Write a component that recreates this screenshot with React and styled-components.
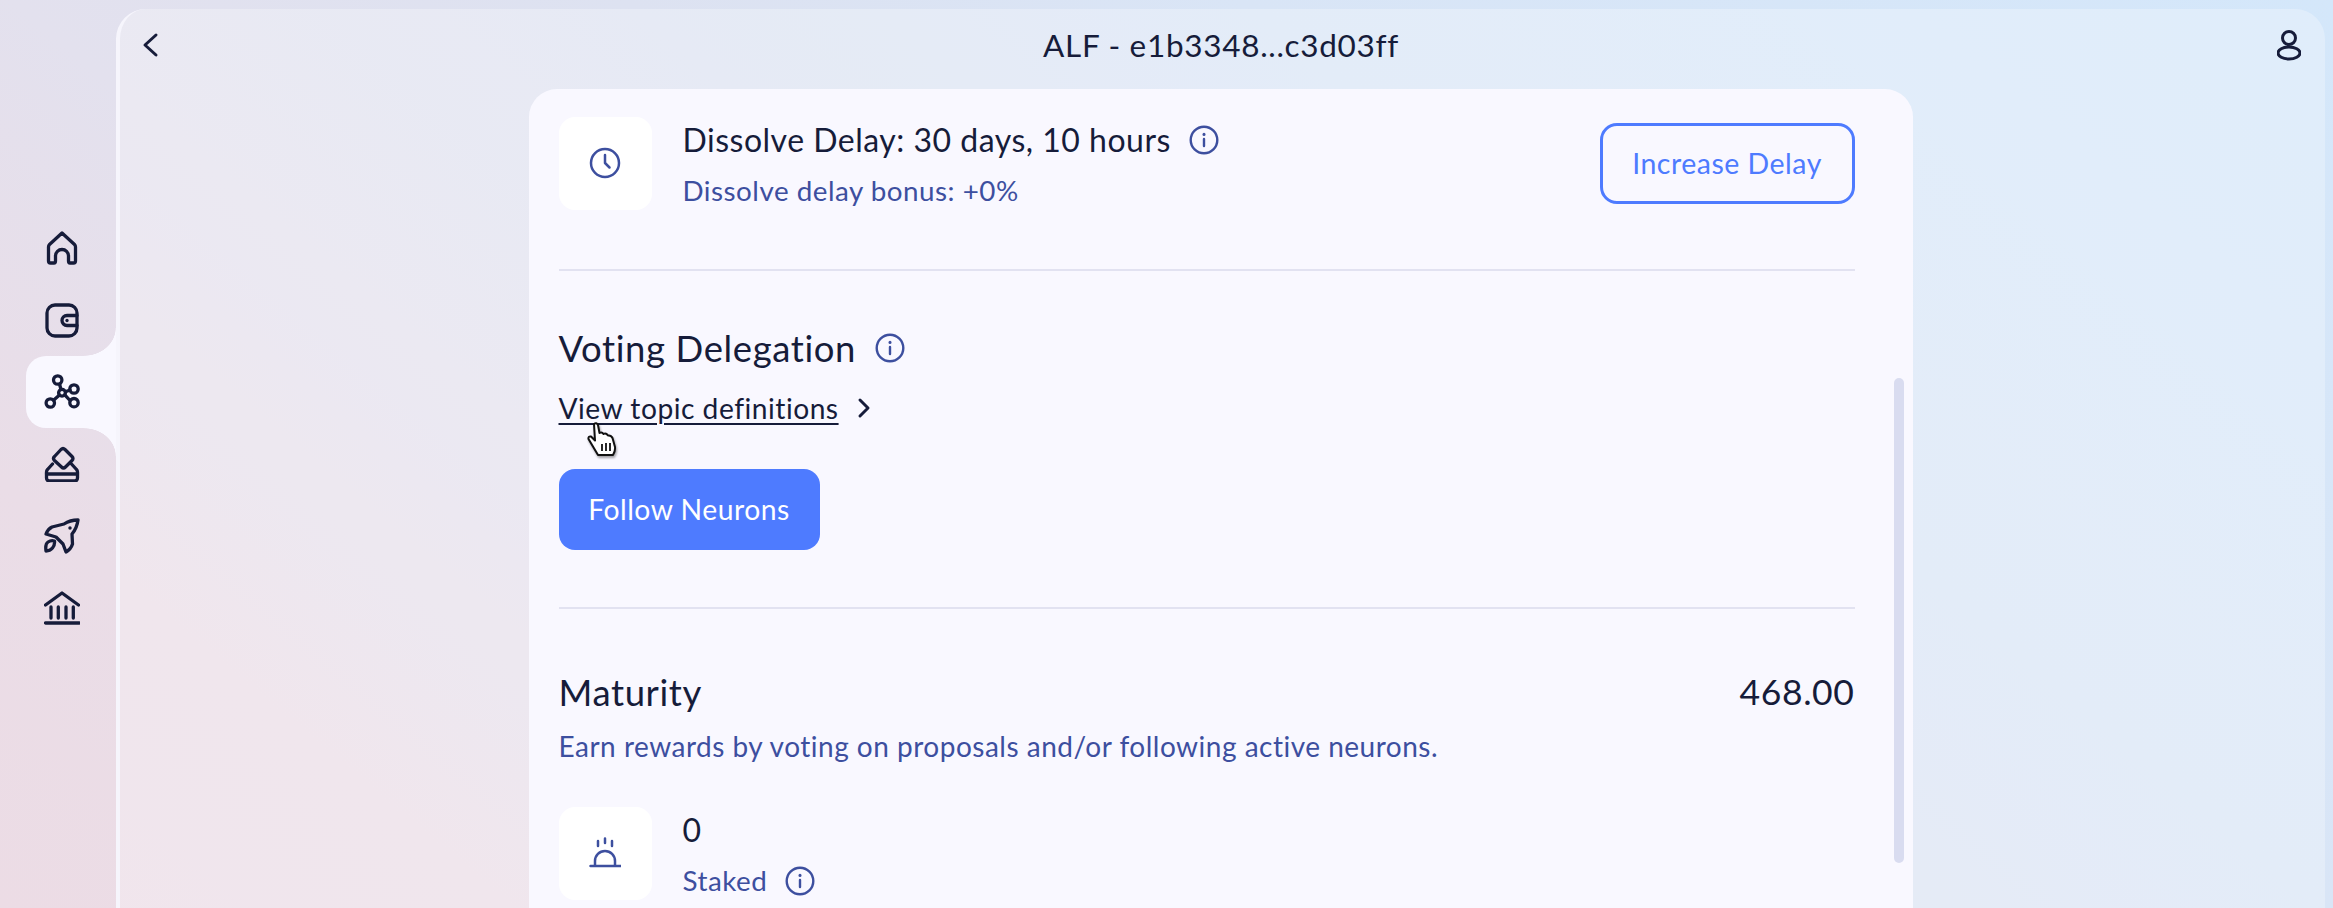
import React from 'react'
import styled, { createGlobalStyle } from 'styled-components'

const GlobalStyle = createGlobalStyle`
  html, body {
    margin: 0;
    height: 100%;
    overflow: hidden;
  }
  body {
    font-family: 'Lato', 'Inter', sans-serif;
    color: #161c3a;
  }
`

const Page = styled.div`
  display: flex;
  width: 2333px;
  height: 908px;
  overflow: hidden;
  background: linear-gradient(40deg, #ecdce5 0%, #eaddE7 15%, #e3e1ee 32%, #dde2f1 50%, #d9e5f6 68%, #d4e7fa 100%);
`

const Sidebar = styled.nav`
  flex: none;
  width: 116px;
  padding-top: 212px;
  box-sizing: border-box;
`

const NavItem = styled.div`
  position: relative;
  display: flex;
  align-items: center;
  justify-content: center;
  height: 72px;
  margin-left: 26px;
  padding-right: 18px;
  border-radius: 20px 0 0 20px;
  background: ${p => (p.$active ? '#f9f8ff' : 'transparent')};

  ${p => p.$active && `
    &::before, &::after {
      content: '';
      position: absolute;
      right: 0;
      width: 32px;
      height: 28px;
    }
    &::before {
      top: -28px;
      background: radial-gradient(ellipse 32px 28px at 0 0, transparent 98%, #f9f8ff 100%);
    }
    &::after {
      bottom: -28px;
      background: radial-gradient(ellipse 32px 28px at 0 100%, transparent 98%, #f9f8ff 100%);
    }
  `}

  svg {
    display: block;
    width: 36px;
    height: 36px;
    fill: none;
    stroke: #161c3a;
    stroke-width: 3.3;
    stroke-linecap: round;
    stroke-linejoin: round;
  }
`

const Panel = styled.main`
  flex: 1;
  min-width: 0;
  display: flex;
  flex-direction: column;
  align-items: center;
  margin: 9px 8px 0 0;
  border-left: 4px solid #f6f5fc;
  border-radius: 30px 30px 0 0;
  background: rgba(255, 255, 255, 0.28);
`

const TopBar = styled.header`
  flex: none;
  align-self: stretch;
  display: flex;
  align-items: center;
  height: 72px;
  margin-bottom: 8px;
  padding: 0 24px 0 21px;

  svg {
    display: block;
    fill: none;
    stroke: #161c3a;
    stroke-width: 3;
    stroke-linecap: round;
    stroke-linejoin: round;
  }
`

const TopSlot = styled.div`
  flex: 1;
  display: flex;
  justify-content: ${p => (p.$end ? 'flex-end' : 'flex-start')};
`

const PageTitle = styled.h1`
  margin: 0;
  font-size: 31.5px;
  font-weight: 400;
  letter-spacing: 0.7px;
`

const Card = styled.section`
  position: relative;
  flex: none;
  width: 1384px;
  height: 900px;
  box-sizing: border-box;
  margin-right: 4px;
  padding: 28px 58px 0 30px;
  border-radius: 28px 28px 0 0;
  background: #f9f8ff;
`

const Row = styled.div`
  display: flex;
  align-items: flex-start;
  gap: 31px;
`

const Tile = styled.div`
  flex: none;
  display: flex;
  align-items: center;
  justify-content: center;
  width: 93px;
  height: 93px;
  border-radius: 16px;
  background: #fff;

  svg {
    display: block;
    width: 32px;
    height: 32px;
    margin-bottom: 2px;
    fill: none;
    stroke: #3d4f9f;
    stroke-width: 2.5;
    stroke-linecap: round;
    stroke-linejoin: round;
  }
`

const RowText = styled.div`
  flex: 1;
  padding-top: 4px;
`

const RowTitle = styled.div`
  display: flex;
  align-items: center;
  gap: 18px;
  font-size: 32px;
  line-height: 38px;
  letter-spacing: 0.5px;
`

const RowSub = styled.div`
  display: flex;
  align-items: center;
  gap: 18px;
  margin-top: 14px;
  font-size: 27.8px;
  line-height: 36px;
  letter-spacing: 0.5px;
  color: #3d4f9f;
`

const Info = styled.svg.attrs({ viewBox: '0 0 30 30' })`
  flex: none;
  display: block;
  width: 30px;
  height: 30px;
  fill: none;
  stroke: #3d4f9f;
  stroke-width: 2.4;
  stroke-linecap: round;
`

const OutlineButton = styled.button`
  flex: none;
  align-self: center;
  width: 255px;
  height: 81px;
  padding: 0 0 2px;
  border: 3px solid #4e7bff;
  border-radius: 17px;
  background: transparent;
  font: inherit;
  font-size: 28.5px;
  letter-spacing: 0.5px;
  color: #4e7bff;
`

const SolidButton = styled.button`
  display: block;
  width: 261px;
  height: 81px;
  margin-top: 43px;
  padding: 0 0 2px;
  border: 0;
  border-radius: 16px;
  background: #4e7bff;
  font: inherit;
  font-size: 28.3px;
  letter-spacing: 0.5px;
  color: #fff;
`

const Divider = styled.hr`
  height: 2px;
  margin: ${p => p.$top}px 0 0;
  border: 0;
  background: #e2e2f1;
`

const SectionHead = styled.div`
  display: flex;
  align-items: center;
  justify-content: space-between;
  margin-top: ${p => p.$top}px;
`

const Heading = styled.h2`
  display: flex;
  align-items: center;
  gap: 19px;
  margin: 0;
  font-size: 36.5px;
  line-height: 44px;
  font-weight: 400;
  letter-spacing: 0.6px;
`

const Amount = styled.span`
  font-size: 35.5px;
  line-height: 44px;
  letter-spacing: 0.6px;
`

const LinkRow = styled.div`
  position: relative;
  display: flex;
  align-items: center;
  gap: 18px;
  margin-top: 20px;
  font-size: 28.2px;
  line-height: 36px;
  letter-spacing: 0.5px;

  a {
    color: inherit;
    text-decoration: underline;
    text-underline-offset: 4px;
    text-decoration-thickness: 2px;
  }
`

const Cursor = styled.svg.attrs({ viewBox: '0 0 32 34' })`
  position: absolute;
  left: 27px;
  top: 32px;
  width: 32px;
  height: 34px;
  filter: drop-shadow(1px 2px 1px rgba(0, 0, 0, 0.35));
`

const Description = styled.p`
  margin: 14px 0 43px;
  font-size: 28px;
  line-height: 36px;
  letter-spacing: 0.5px;
  color: #3d4f9f;
`

const ScrollThumb = styled.div`
  position: absolute;
  top: 289px;
  right: 9px;
  width: 10px;
  height: 485px;
  border-radius: 5px;
  background: #d9dcf0;
`

const InfoIcon = () => (
  <Info>
    <circle cx="15" cy="15" r="13.3" />
    <path d="M15 14v7" />
    <path d="M15 9.2v.2" strokeWidth="3" />
  </Info>
)

const navIcons = [
  <svg viewBox="0 0 36 36" key="home"><path d="M18 3 5.5 14.5Q4.5 15.5 4.5 17V31Q4.5 33 6.5 33H10Q11.5 33 11.5 31V26a6.5 6.5 0 0 1 13 0V31Q24.5 33 26 33H29.5Q31.5 33 31.5 31V17Q31.5 15.5 30.5 14.5Z" /></svg>,
  <svg viewBox="0 0 36 36" key="wallet"><rect x="3" y="3" width="30" height="31" rx="8" /><path d="M33 13.500H23a5 5 0 0 0 0 10H33" /><path d="M23 18.500v.1" /></svg>,
  <svg viewBox="0 0 36 36" key="neurons"><circle cx="13.7" cy="6" r="4.2" /><circle cx="30" cy="15" r="4.2" /><circle cx="18" cy="18.7" r="3.4" /><circle cx="6.3" cy="29" r="4.2" /><circle cx="30" cy="28.7" r="4.2" /><path d="M15.5 10 17 15.5M21.500 17.700 26 16M15.500 21 9.500 26.200M20.800 20.800 26 26.500" /></svg>,
  <svg viewBox="0 0 36 36" key="vote"><path d="M17 3.500Q19 1.500 21 3.500L28 10.500Q30 12.500 28 14.500L21.500 21Q19.500 23 17.500 21L10.500 14.500Q8.500 12.500 10.500 10.500Z" /><path d="M8.500 18 3.500 23.500Q2.500 24.500 2.500 26V32Q2.500 35 5.500 35H30.500Q33.500 35 33.500 32V26Q33.500 24.500 32.500 23.500L27.500 18" /><path d="M2.500 28H33.500" /></svg>,
  <svg viewBox="0 0 36 36" key="launch"><path d="M34 2Q26 2 20 6L8 9Q4 11 2 16L12 19 19 26 22 34Q27 31 28.500 26L28 16Q33 10 34 2Z" /><path d="M26 10v.1" strokeWidth="3.500" /><path d="M2 33Q1 26 4 24 7 22 10.500 23 11 27 8.500 30 6 33 2 33Z" /></svg>,
  <svg viewBox="0 0 36 36" key="bank"><path d="M1.500 15 18 3 34.500 15" /><path d="M7 17V28M14.300 17V28M22 17V28M29.300 17V28" /><path d="M1.500 33H35.500" /></svg>,
]

const App = () => {
  return (
    <Page>
      <GlobalStyle />
      <Sidebar>
        {navIcons.map((icon, i) => (
          <NavItem key={i} $active={i === 2}>{icon}</NavItem>
        ))}
      </Sidebar>
      <Panel>
        <TopBar>
          <TopSlot>
            <svg width="18" height="26" viewBox="0 0 18 26"><path d="M15 3 4 13 15 23" /></svg>
          </TopSlot>
          <PageTitle>ALF - e1b3348...c3d03ff</PageTitle>
          <TopSlot $end>
            <svg width="24" height="34" viewBox="3 0 24 34"><circle cx="15" cy="10" r="6.5" /><ellipse cx="15" cy="25" rx="11" ry="6" /></svg>
          </TopSlot>
        </TopBar>
        <Card>
          <Row>
            <Tile>
              <svg viewBox="0 0 32 32"><circle cx="16" cy="16" r="14" /><path d="M16 8V16L20.500 20.500" /></svg>
            </Tile>
            <RowText>
              <RowTitle>Dissolve Delay: 30 days, 10 hours <InfoIcon /></RowTitle>
              <RowSub>Dissolve delay bonus: +0%</RowSub>
            </RowText>
            <OutlineButton>Increase Delay</OutlineButton>
          </Row>
          <Divider $top={59} />
          <SectionHead $top={55}>
            <Heading>Voting Delegation <InfoIcon /></Heading>
          </SectionHead>
          <LinkRow>
            <a href="#topics">View topic definitions</a>
            <svg width="14" height="22" viewBox="0 0 14 22" fill="none" stroke="#161c3a" strokeWidth="3" strokeLinecap="round" strokeLinejoin="round"><path d="M3 3 11 11 3 19" /></svg>
            <Cursor>
              <path d="M8 2Q10.500 0 12 3L13.500 11Q16 9.500 17.500 12Q20 10.500 22 13.500Q25 13 26.500 16L29 25Q29.500 29 27 33H12L2.500 17Q2 14 5 14.500L9 18.500Z" fill="#fff" stroke="#111" strokeWidth="2" strokeLinejoin="round" />
              <path d="M16 22V29M20 21V29M24 21V29" stroke="#111" strokeWidth="1.800" />
            </Cursor>
          </LinkRow>
          <SolidButton>Follow Neurons</SolidButton>
          <Divider $top={57} />
          <SectionHead $top={61}>
            <Heading>Maturity</Heading>
            <Amount>468.00</Amount>
          </SectionHead>
          <Description>Earn rewards by voting on proposals and/or following active neurons.</Description>
          <Row>
            <Tile>
              <svg viewBox="0 0 32 32"><path d="M1.500 29H31.500" /><path d="M6 28.500V24a10 10 0 0 1 20 0V28.500" /><path d="M9 4V9M16 1.500V6M23 4V9" /></svg>
            </Tile>
            <RowText>
              <RowTitle>0</RowTitle>
              <RowSub>Staked <InfoIcon /></RowSub>
            </RowText>
          </Row>
          <ScrollThumb />
        </Card>
      </Panel>
    </Page>
  )
}

export default App
